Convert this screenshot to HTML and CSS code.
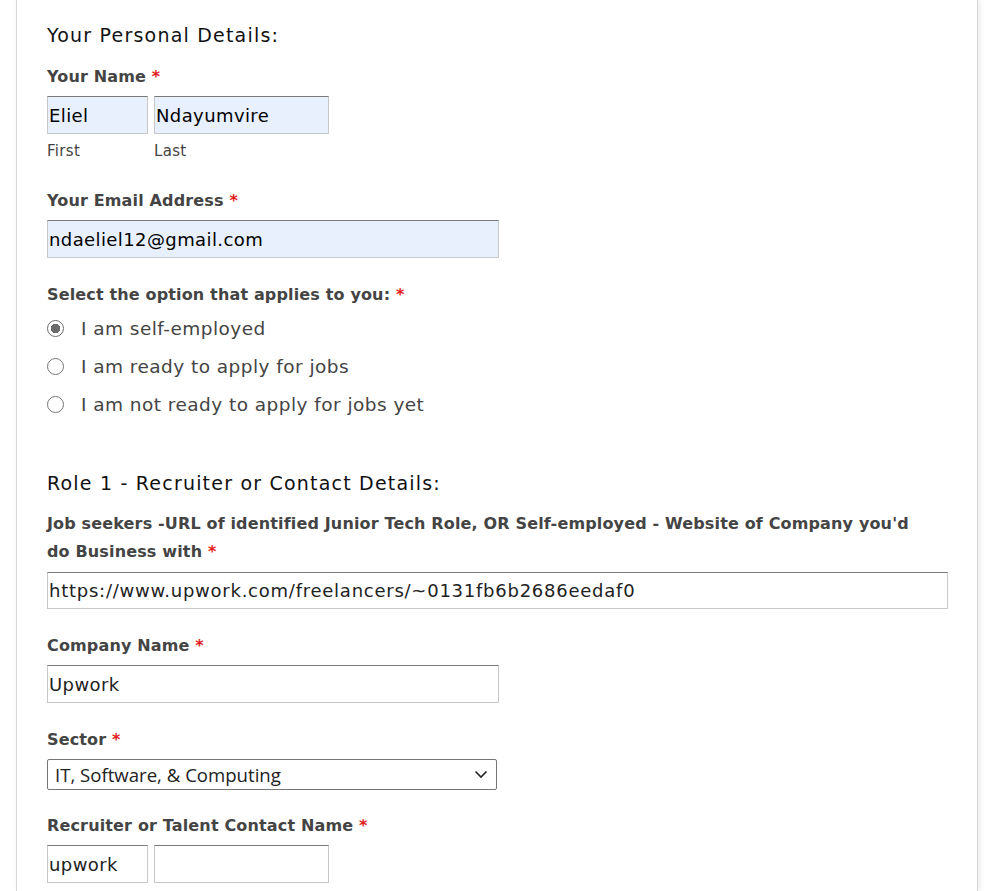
FILE: index.html
```html
<!DOCTYPE html>
<html>
<head>
<meta charset="utf-8">
<link rel="stylesheet" href="styles.css">
</head>
<body>
<div class="page">
  <form class="form">
    <h2 class="section-title">Your Personal Details:</h2>

    <div class="field with-sub">
      <label class="label">Your Name <span class="req">*</span></label>
      <div class="name-row">
        <div class="name-part">
          <input class="input autofill short" type="text" value="Eliel">
          <span class="sub">First</span>
        </div>
        <div class="name-part">
          <input class="input autofill medium" type="text" value="Ndayumvire">
          <span class="sub">Last</span>
        </div>
      </div>
    </div>

    <div class="field">
      <label class="label">Your Email Address <span class="req">*</span></label>
      <input class="input autofill half" type="text" value="ndaeliel12@gmail.com">
    </div>

    <div class="field">
      <label class="label">Select the option that applies to you: <span class="req">*</span></label>
      <div class="radios">
        <label class="radio"><input type="radio" name="opt" checked><span>I am self-employed</span></label>
        <label class="radio"><input type="radio" name="opt"><span>I am ready to apply for jobs</span></label>
        <label class="radio"><input type="radio" name="opt"><span>I am not ready to apply for jobs yet</span></label>
      </div>
    </div>

    <h2 class="section-title second">Role 1 - Recruiter or Contact Details:</h2>

    <div class="field">
      <label class="label long">Job seekers -URL of identified Junior Tech Role, OR Self-employed - Website of Company you'd do Business with <span class="req">*</span></label>
      <input class="input full url" type="text" value="https://www.upwork.com/freelancers/~0131fb6b2686eedaf0">
    </div>

    <div class="field">
      <label class="label">Company Name <span class="req">*</span></label>
      <input class="input half" type="text" value="Upwork">
    </div>

    <div class="field select-field">
      <label class="label">Sector <span class="req">*</span></label>
      <div class="select">
        <span class="select-text">IT, Software, &amp; Computing</span>
        <svg class="chev" width="14" height="9" viewBox="0 0 14 9"><path d="M1.5 1.5 L7 7 L12.5 1.5" fill="none" stroke="#222" stroke-width="1.6"/></svg>
      </div>
    </div>

    <div class="field">
      <label class="label">Recruiter or Talent Contact Name <span class="req">*</span></label>
      <div class="name-row">
        <input class="input short" type="text" value="upwork">
        <input class="input medium" type="text" value="">
      </div>
    </div>
  </form>
</div>
</body>
</html>
```

FILE: styles.css
```css
html, body {
  margin: 0;
  padding: 0;
  background: #ffffff;
}

.page {
  margin-left: 16px;
  width: 962px;
  border-left: 1px solid #d6d6d6;
  border-right: 1px solid #d6d6d6;
  box-shadow: 2px 0 6px rgba(0,0,0,0.08);
  min-height: 891px;
  box-sizing: border-box;
  background: #fff;
}

.form {
  padding: 22px 29px 0 30px;
  font-family: "DejaVu Sans", "Liberation Sans", sans-serif;
  color: #444;
}

.section-title {
  margin: 0 0 15px 0;
  font-weight: normal;
  font-size: 19px;
  color: #111;
  letter-spacing: 1.2px;
  line-height: 26px;
}

.section-title.second {
  margin-top: 47px;
  margin-bottom: 14px;
}

.field {
  margin-bottom: 23px;
}

.field.with-sub {
  margin-bottom: 27px;
}

.field.select-field {
  margin-bottom: 22px;
}

.label {
  display: block;
  font-weight: bold;
  font-size: 16px;
  line-height: 28px;
  color: #444;
  margin-bottom: 5px;
  letter-spacing: 0.15px;
}

.label.long {
  max-width: 885px;
  margin-bottom: 6px;
}

.req {
  color: #e21b1b;
}

.name-row {
  display: flex;
  gap: 6px;
}

.name-part {
  display: flex;
  flex-direction: column;
}

.sub {
  font-size: 15px;
  line-height: 18px;
  margin-top: 8px;
  color: #444;
  letter-spacing: 0.3px;
}

.input {
  box-sizing: border-box;
  height: 38px;
  border: 1px solid #c8c8c8;
  border-top-color: #7a7a7a;
  padding: 0 0 0 1px;
  font-family: "DejaVu Sans", sans-serif;
  font-size: 18px;
  letter-spacing: 0.4px;
  color: #222;
  background: #fff;
  margin: 0;
  outline: none;
}

.input.url {
  letter-spacing: 0.75px;
  height: 37px;
}

.input.autofill {
  background: #e8f0fe;
  color: #000;
}

.input.short { width: 101px; }
.input.medium { width: 175px; }
.input.half { width: 452px; }
.input.full { width: 901px; }

.radios {
  display: flex;
  flex-direction: column;
  margin-top: -5px;
}

.radio {
  display: flex;
  align-items: center;
  height: 38px;
  font-size: 18.5px;
  color: #444;
  letter-spacing: 0.45px;
}

.radio input {
  appearance: none;
  -webkit-appearance: none;
  width: 17px;
  height: 17px;
  margin: 0 17px 0 0;
  border: 1px solid #767676;
  border-radius: 50%;
  background: #fff;
  box-sizing: border-box;
}

.radio input:checked {
  border-color: #6b6b6b;
  background: radial-gradient(circle, #6b6b6b 0 4.5px, #fff 5px);
}

.select {
  box-sizing: border-box;
  width: 450px;
  height: 31px;
  border: 1px solid #767676;
  border-radius: 2px;
  display: flex;
  align-items: center;
  justify-content: space-between;
  padding: 0 8px 0 7px;
  font-family: "Open Sans", "Noto Sans", sans-serif;
  font-size: 18.6px;
  color: #222;
}

.chev {
  display: block;
}
```
